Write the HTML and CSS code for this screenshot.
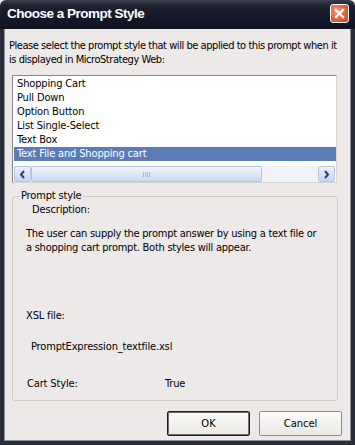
FILE: index.html
```html
<!DOCTYPE html>
<html>
<head>
<meta charset="utf-8">
<link rel="stylesheet" href="styles.css">
</head>
<body>
<div class="window">
  <div class="titlebar">
    <span class="title">Choose a Prompt Style</span>
    <span class="close"><svg width="13" height="13" viewBox="0 0 13 13"><path d="M3 3 L10 10 M10 3 L3 10" stroke="#fff" stroke-width="2.4" stroke-linecap="square"/></svg></span>
  </div>
  <div class="frame">
    <p class="intro">Please select the prompt style that will be applied to this prompt when it<br>is displayed in MicroStrategy Web:</p>
    <div class="listbox">
      <ul class="items">
        <li>Shopping Cart</li>
        <li>Pull Down</li>
        <li>Option Button</li>
        <li>List Single-Select</li>
        <li>Text Box</li>
        <li class="selected">Text File and Shopping cart</li>
      </ul>
      <div class="hscroll">
        <span class="arrow"><svg width="7" height="9" viewBox="0 0 7 9"><path d="M5 1 L2 4.5 L5 8" fill="none" stroke="#2b3f73" stroke-width="2"/></svg></span>
        <div class="track">
          <div class="thumb"><span class="grip"></span></div>
        </div>
        <span class="arrow"><svg width="7" height="9" viewBox="0 0 7 9"><path d="M2 1 L5 4.5 L2 8" fill="none" stroke="#2b3f73" stroke-width="2"/></svg></span>
      </div>
    </div>
    <fieldset class="group">
      <legend>Prompt style</legend>
      <div class="desc-label">Description:</div>
      <p class="desc">The user can supply the prompt answer by using a text file or<br>a shopping cart prompt. Both styles will appear.</p>
      <div class="xsl-label">XSL file:</div>
      <div class="xsl">PromptExpression_textfile.xsl</div>
      <div class="cart"><span class="cart-label">Cart Style:</span><span>True</span></div>
    </fieldset>
    <div class="buttons">
      <button class="btn default">OK</button>
      <button class="btn">Cancel</button>
    </div>
  </div>
</div>
</body>
</html>
```
FILE: styles.css
```css
html, body {
  margin: 0;
  padding: 0;
  background: #ece9e8;
}
.window {
  width: 355px;
  height: 445px;
  display: flex;
  flex-direction: column;
  font-family: "DejaVu Sans Condensed", "DejaVu Sans", sans-serif;
  font-stretch: condensed;
  font-size: 11px;
  letter-spacing: -0.15px;
  color: #000;
}
.titlebar {
  height: 29px;
  flex: none;
  box-sizing: border-box;
  display: flex;
  align-items: center;
  justify-content: space-between;
  padding: 0 6px 2px 7px;
  background: linear-gradient(#3a3d4c 0%, #1e2130 20%, #15182a 60%, #11131f 100%);
  border-radius: 6px 6px 0 0;
}
.title {
  color: #fff;
  font-family: "Liberation Sans", Arial, sans-serif;
  font-stretch: normal;
  font-weight: bold;
  font-size: 13.5px;
  letter-spacing: -0.5px;
}
.close {
  width: 17px;
  height: 17px;
  border: 1px solid #fff;
  border-radius: 3px;
  background: radial-gradient(circle at 35% 35%, #f0a080 0%, #e06a40 45%, #c7431d 100%);
  display: flex;
  align-items: center;
  justify-content: center;
}
.frame {
  flex: 1;
  display: flex;
  flex-direction: column;
  border: 4px solid #2a2d3a;
  border-top: none;
  box-shadow: inset 1px 0 #8a8c96, inset -1px 0 #8a8c96, inset 0 -1px #8a8c96;
  padding: 0 13px 0 8px;
}
.intro {
  margin: 10px -15px 0 -3px;
  line-height: 14px;
  white-space: nowrap;
  letter-spacing: -0.45px;
}
.listbox {
  margin-top: 8px;
  margin-right: 1px;
  height: 108px;
  box-sizing: border-box;
  border: 1px solid #878787;
  border-right-color: #d6d3d0;
  border-bottom-color: #d6d3d0;
  background: #fff;
  display: flex;
  flex-direction: column;
}
.items {
  list-style: none;
  margin: 0;
  padding: 1px 0 0 1px;
  flex: 1;
}
.items li {
  height: 14px;
  line-height: 14px;
  padding-left: 3px;
}
.items li.selected {
  background: #5a7db8;
  color: #fff;
}
.hscroll {
  height: 16px;
  display: flex;
  margin: 0 1px 0 1px;
  background: linear-gradient(90deg, #f6f6f8, #f0f2f8);
}
.arrow {
  width: 15px;
  height: 14px;
  flex: none;
  border: 1px solid #b7c6e2;
  border-radius: 2px;
  background: linear-gradient(#eef2fc, #c6d4f0);
  display: flex;
  align-items: center;
  justify-content: center;
}
.track {
  flex: 1;
  display: flex;
}
.thumb {
  width: 229px;
  height: 14px;
  border: 1px solid #b2c4e4;
  border-radius: 2px;
  background: linear-gradient(#f3f6fd, #c9d8f4);
  display: flex;
  align-items: center;
  justify-content: center;
}
.grip {
  width: 7px;
  height: 5px;
  background: repeating-linear-gradient(90deg, #a4b6d8 0 1px, transparent 1px 2px);
}
.group {
  margin: 7px 0 0 0;
  padding: 0 0 0 13px;
  height: 211px;
  box-sizing: border-box;
  border: 1px solid #cfcdc2;
  border-radius: 3px;
}
.group legend {
  padding: 0 1px;
  margin-left: -6px;
  line-height: 12px;
}
.desc-label {
  margin: 1px 0 0 6px;
}
.desc {
  margin: 11px 0 0 0;
  line-height: 14px;
  white-space: nowrap;
  letter-spacing: -0.25px;
}
.xsl-label {
  margin-top: 54px;
  margin-left: 0;
}
.xsl {
  margin-top: 18px;
  margin-left: 5px;
}
.cart {
  margin-top: 24px;
  margin-left: 1px;
  display: flex;
}
.cart-label {
  width: 138px;
}
.buttons {
  display: flex;
  justify-content: flex-end;
  gap: 9px;
  margin-top: 10px;
  margin-right: -4px;
}
.btn {
  width: 83px;
  height: 25px;
  font-family: "DejaVu Sans Condensed", "DejaVu Sans", sans-serif;
  font-stretch: condensed;
  font-size: 11px;
  color: #000;
  border: 1px solid #8a8a8a;
  border-radius: 2px;
  background: linear-gradient(#fbfbfa, #ebe9e5);
  padding: 0;
}
.btn.default {
  border: 1px solid #1c1c1c;
  box-shadow: inset 0 0 0 1px #6f6f6f;
}
```
